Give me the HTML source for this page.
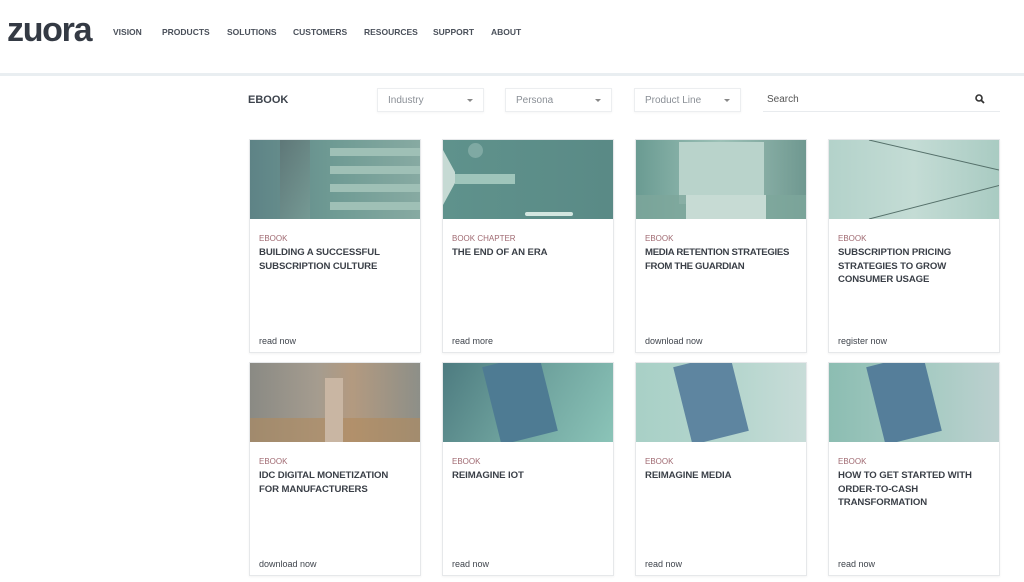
<!DOCTYPE html>
<html><head><meta charset="utf-8"><style>
*{margin:0;padding:0;box-sizing:border-box}
body{width:1024px;height:582px;overflow:hidden;background:#fff;font-family:"Liberation Sans",sans-serif;color:#3b4049;position:relative}
.logo{position:absolute;left:7px;top:13px;font-size:34px;font-weight:bold;letter-spacing:-1.3px;color:#343a44;line-height:34px}
.nav{position:absolute;top:27px;font-size:8.5px;font-weight:bold;color:#4a505a}
.hr{position:absolute;left:0;top:73px;width:1024px;height:3px;background:#e9eef1}
.ebook{position:absolute;left:248px;top:94px;font-size:11px;font-weight:bold;color:#3d434c}
.sel{position:absolute;top:88px;width:107px;height:24px;border:1px solid #eceef0;font-size:10px;color:#8a8f96;padding:6px 10px;box-shadow:0 1px 2px rgba(0,0,0,.04)}
.sel:after{content:"";position:absolute;right:10px;top:10px;border:3px solid transparent;border-top:3px solid #888}
.search{position:absolute;left:763px;top:88px;width:237px;height:24px;border-bottom:1px solid #e8ebee;font-size:10px;color:#555;padding:6px 4px}
.card{position:absolute;width:172px;height:214px;border:1px solid #e6e8ea;background:#fff;box-shadow:0 1px 2px rgba(0,0,0,.05)}
.img{height:79px;position:relative;overflow:hidden}
.tag{position:absolute;left:9px;top:94px;font-size:8px;color:#a06a72}
.ttl{position:absolute;left:9px;top:106px;width:162px;font-size:9.6px;font-weight:bold;line-height:13.5px;color:#3a3f47;letter-spacing:-0.1px}
.lnk{position:absolute;left:9px;top:196px;font-size:9px;color:#3f444c}
</style></head><body>
<div class="logo">zuora</div>
<div class="nav" style="left:113px">VISION</div>
<div class="nav" style="left:162px">PRODUCTS</div>
<div class="nav" style="left:227px">SOLUTIONS</div>
<div class="nav" style="left:293px">CUSTOMERS</div>
<div class="nav" style="left:364px">RESOURCES</div>
<div class="nav" style="left:433px">SUPPORT</div>
<div class="nav" style="left:491px">ABOUT</div>
<div class="hr"></div>
<div class="ebook">EBOOK</div>
<div class="sel" style="left:377px">Industry</div>
<div class="sel" style="left:505px">Persona</div>
<div class="sel" style="left:634px">Product Line</div>
<div class="search">Search
<svg style="position:absolute;right:15px;top:6px" width="10" height="10" viewBox="0 0 10 10"><circle cx="4" cy="4" r="3" fill="none" stroke="#333" stroke-width="1.6"/><path d="M6.2 6.2L9 9" stroke="#333" stroke-width="1.8"/></svg></div>

<div class="card" style="left:249px;top:139px"><div class="img" style="background:linear-gradient(90deg,#5e8386,#6f9b94 50%,#87aaa2)">
<div style="position:absolute;left:80px;top:8px;width:92px;height:8px;background:#9fc0b6"></div>
<div style="position:absolute;left:80px;top:26px;width:92px;height:8px;background:#9fc0b6"></div>
<div style="position:absolute;left:80px;top:44px;width:92px;height:8px;background:#9fc0b6"></div>
<div style="position:absolute;left:80px;top:62px;width:92px;height:8px;background:#9fc0b6"></div>
<div style="position:absolute;left:30px;top:0;width:30px;height:79px;background:linear-gradient(120deg,#5c6f70,#7a9c96);opacity:.7"></div></div>
<div class="tag">EBOOK</div><div class="ttl">BUILDING A SUCCESSFUL<br>SUBSCRIPTION CULTURE</div><div class="lnk">read now</div></div>

<div class="card" style="left:442px;top:139px"><div class="img" style="background:linear-gradient(90deg,#5f928c,#5a8a86)">
<div style="position:absolute;left:0;top:10px;width:12px;height:55px;background:#c6dad4;clip-path:polygon(0 0,100% 40%,100% 60%,0 100%)"></div>
<div style="position:absolute;left:12px;top:34px;width:60px;height:10px;background:#9fc5bb"></div>
<div style="position:absolute;left:25px;top:3px;width:15px;height:15px;border-radius:50%;background:#7fa9a3"></div>
<div style="position:absolute;left:82px;top:72px;width:48px;height:4px;background:#d3e6e0;border-radius:2px"></div></div>
<div class="tag">BOOK CHAPTER</div><div class="ttl">THE END OF AN ERA</div><div class="lnk">read more</div></div>

<div class="card" style="left:635px;top:139px"><div class="img" style="background:linear-gradient(90deg,#6a9b92,#9dc1b7 50%,#6f9890)">
<div style="position:absolute;left:43px;top:2px;width:85px;height:62px;background:#b9d3cb"></div>
<div style="position:absolute;left:0;top:55px;width:172px;height:24px;background:#7da69b;opacity:.8"></div>
<div style="position:absolute;left:50px;top:55px;width:80px;height:24px;background:#c7dbd4"></div></div>
<div class="tag">EBOOK</div><div class="ttl" style="letter-spacing:-0.3px">MEDIA RETENTION STRATEGIES<br>FROM THE GUARDIAN</div><div class="lnk">download now</div></div>

<div class="card" style="left:828px;top:139px"><div class="img" style="background:linear-gradient(90deg,#b3d2ca,#c4dcd5 50%,#a9cbc2)">
<svg width="172" height="79" style="position:absolute;left:0;top:0"><path d="M40 0 L170 30" stroke="#55706a" stroke-width="1" fill="none"/><path d="M40 79 L172 45" stroke="#55706a" stroke-width="1" fill="none"/></svg></div>
<div class="tag">EBOOK</div><div class="ttl">SUBSCRIPTION PRICING<br>STRATEGIES TO GROW<br>CONSUMER USAGE</div><div class="lnk">register now</div></div>

<div class="card" style="left:249px;top:362px"><div class="img" style="background:linear-gradient(90deg,#8a8a84,#a59c8f 40%,#b39a80 60%,#8d8f88)">
<div style="position:absolute;left:0;top:55px;width:172px;height:24px;background:#b08a5e;opacity:.6"></div>
<div style="position:absolute;left:75px;top:15px;width:18px;height:64px;background:#c9b6a3"></div></div>
<div class="tag">EBOOK</div><div class="ttl">IDC DIGITAL MONETIZATION<br>FOR MANUFACTURERS</div><div class="lnk">download now</div></div>

<div class="card" style="left:442px;top:362px"><div class="img" style="background:linear-gradient(120deg,#4d7b80,#6fa39e 50%,#8bc4b8)">
<div style="position:absolute;left:48px;top:-4px;width:58px;height:80px;background:#4e7b93;transform:rotate(-14deg)"></div></div>
<div class="tag">EBOOK</div><div class="ttl">REIMAGINE IOT</div><div class="lnk">read now</div></div>

<div class="card" style="left:635px;top:362px"><div class="img" style="background:linear-gradient(90deg,#a8d0c6,#b6d6ce 60%,#c8dcd8)">
<div style="position:absolute;left:46px;top:-4px;width:58px;height:80px;background:#5e85a0;transform:rotate(-14deg)"></div></div>
<div class="tag">EBOOK</div><div class="ttl">REIMAGINE MEDIA</div><div class="lnk">read now</div></div>

<div class="card" style="left:828px;top:362px"><div class="img" style="background:linear-gradient(90deg,#8cbdb2,#a7cbc3 60%,#bcd0cf)">
<div style="position:absolute;left:46px;top:-4px;width:58px;height:80px;background:#557e9a;transform:rotate(-14deg)"></div></div>
<div class="tag">EBOOK</div><div class="ttl">HOW TO GET STARTED WITH<br>ORDER-TO-CASH<br>TRANSFORMATION</div><div class="lnk">read now</div></div>
</body></html>
